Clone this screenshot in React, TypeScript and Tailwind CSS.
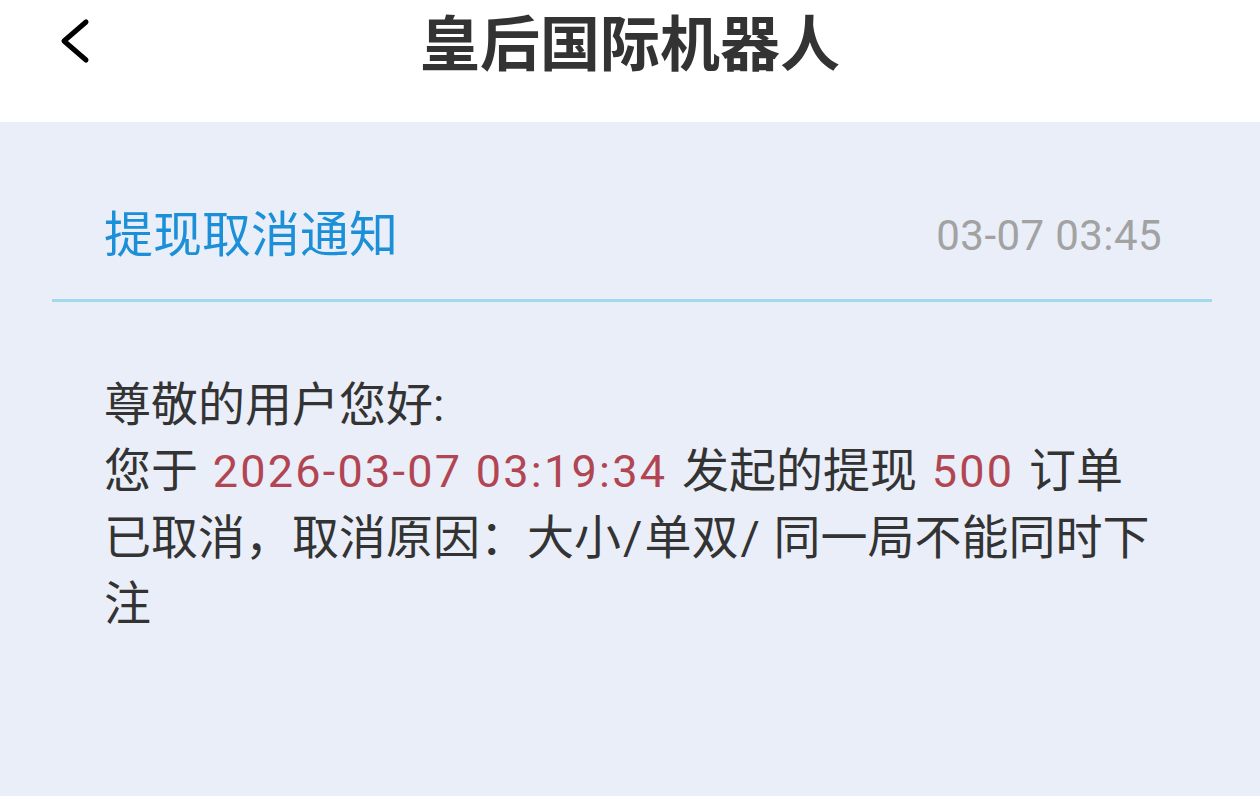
const cjk = "font-['Roboto','Noto_Sans_CJK_SC',sans-serif]";

function TopBar() {
  return (
    <header className="grid grid-cols-[1fr_auto_1fr] items-start h-[122px] bg-white">
      <button className="flex items-center pl-[56px] pt-[14px] text-black">
        <svg width="40" height="52" viewBox="0 0 40 52" fill="none">
          <polyline
            points="30,8 8,27 30,46"
            stroke="currentColor"
            strokeWidth="5"
            strokeLinecap="round"
            strokeLinejoin="round"
          />
        </svg>
      </button>
      <h1 className={`${cjk} pt-[16px] text-[60px] leading-none font-bold text-[#333333]`}>
        皇后国际机器人
      </h1>
      <div />
    </header>
  );
}

// highlighted numbers inside the message body
function Num({ children }: { children: string }) {
  return (
    <span className="mx-[3px] text-[45px] tracking-[0.05em] text-[#b24552]">{children}</span>
  );
}

function Notice() {
  return (
    <section className="mx-[52px] mr-[48px]">
      <div className="flex items-center justify-between pt-[89px] pb-[39px] px-[52px] pr-[50px]">
        <h2 className={`${cjk} text-[49px] leading-none text-[#1b90d8]`}>提现取消通知</h2>
        <span className={`${cjk} text-[42px] leading-none tracking-[0.01em] text-[#a2a2a2]`}>
          03-07 03:45
        </span>
      </div>
      <hr className="h-[3px] border-0 bg-[#a3d9ec]" />
      <div className={`${cjk} pt-[70px] pl-[52px] text-[47px] leading-[66px] text-[#333333]`}>
        <p>尊敬的用户您好:</p>
        <p>
          您于 <Num>2026-03-07 03:19:34</Num> 发起的提现 <Num>500</Num> 订单
          <br />
          已取消，取消原因：大小<span className="mx-[2px]">/</span>单双
          <span className="mx-[2px]">/</span> 同一局不能同时下
          <br />
          注
        </p>
      </div>
    </section>
  );
}

export default function App() {
  return (
    <div className="min-h-[796px] bg-[#e9eef8]">
      <TopBar />
      <Notice />
    </div>
  );
}
